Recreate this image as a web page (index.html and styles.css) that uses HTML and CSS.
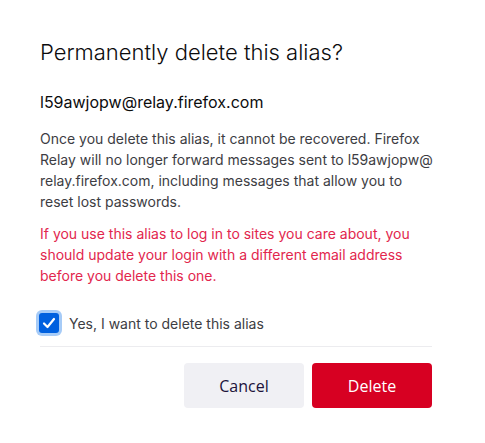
FILE: index.html
```html
<!DOCTYPE html>
<html lang="en">
<head>
<meta charset="utf-8">
<title>Delete alias</title>
<link rel="stylesheet" href="styles.css">
</head>
<body>
<div class="dialog">
  <h2 class="title">Permanently delete this alias?</h2>
  <p class="alias">l59awjopw@relay.firefox.com</p>
  <p class="info">Once you delete this alias, it cannot be recovered. Firefox Relay will no longer forward messages sent to l59awjopw@<wbr>relay.firefox.com, including messages that allow you to reset lost passwords.</p>
  <p class="warning">If you use this alias to log in to sites you care about, you should update your login with a different email address before you delete this one.</p>
  <label class="confirm">
    <span class="check">
      <svg viewBox="0 0 20 20" width="20" height="20"><path d="M5 10.5 L8.5 14 L15 6" fill="none" stroke="#fff" stroke-width="2.2" stroke-linecap="round" stroke-linejoin="round"/></svg>
    </span>
    <span class="confirm-text">Yes, I want to delete this alias</span>
  </label>
  <div class="actions">
    <button class="btn btn-cancel">Cancel</button>
    <button class="btn btn-delete">Delete</button>
  </div>
</div>
</body>
</html>
```

FILE: styles.css
```css
html, body {
  margin: 0;
  background: #fff;
}
body {
  font-family: Inter, "Noto Sans", sans-serif;
}
.dialog {
  width: 392px;
  padding: 38px 40px 0 40px;
}
.title {
  margin: 0;
  font-size: 22px;
  font-weight: 300;
  line-height: 28px;
  color: #0c0c0d;
}
.alias {
  margin: 25px 0 0;
  font-size: 16px;
  line-height: 22px;
  color: #0c0c0d;
}
.info {
  margin: 15px -6px 0 0;
  font-size: 14px;
  line-height: 21px;
  color: #3d3d43;
}
.warning {
  margin: 11px 0 0;
  font-size: 14px;
  line-height: 21px;
  color: #e2264d;
}
.confirm {
  display: flex;
  align-items: center;
  gap: 10px;
  margin-top: 27px;
  padding-bottom: 13px;
  border-bottom: 1px solid #ececef;
}
.check {
  display: flex;
  align-items: center;
  justify-content: center;
  width: 20px;
  height: 20px;
  margin-left: -1px;
  border-radius: 3px;
  background: #0060df;
  box-shadow: 0 0 0 3px #a6cbf7;
}
.confirm-text {
  font-size: 14px;
  color: #3d3d43;
}
.actions {
  display: flex;
  justify-content: flex-end;
  gap: 8px;
  margin-top: 16px;
}
.btn {
  width: 120px;
  height: 45px;
  border: none;
  border-radius: 4px;
  font-family: "Open Sans", sans-serif;
  font-size: 16px;
}
.btn-cancel {
  background: #f0f0f4;
  color: #20123a;
}
.btn-delete {
  background: #d70022;
  color: #fff;
}
```
